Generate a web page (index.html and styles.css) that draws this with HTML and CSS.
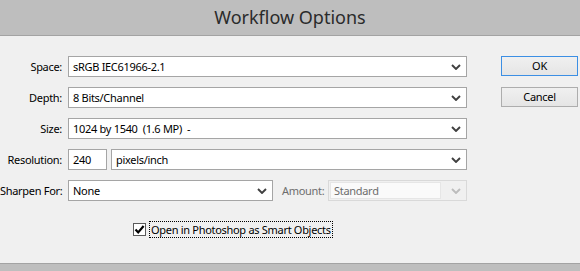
FILE: index.html
```html
<!DOCTYPE html>
<html lang="en">

<head>
    <meta charset="UTF-8">
    <meta name="viewport" content="width=device-width, initial-scale=1.0">
    <title>Workflow Options</title>
    <link rel="stylesheet" href="styles.css">
</head>

<body>
    <div class="dialog">
        <div class="title-bar">Workflow Options</div>

        <div class="dialog-body">
            <div class="fields">
                <div class="row">
                    <span class="label">Space:</span>
                    <div class="combo wide">
                        <span class="value">sRGB IEC61966-2.1</span>
                        <svg class="chevron" width="10" height="6" viewBox="0 0 10 6"><polyline points="1,1 5,5 9,1" /></svg>
                    </div>
                </div>

                <div class="row">
                    <span class="label">Depth:</span>
                    <div class="combo wide">
                        <span class="value">8 Bits/Channel</span>
                        <svg class="chevron" width="10" height="6" viewBox="0 0 10 6"><polyline points="1,1 5,5 9,1" /></svg>
                    </div>
                </div>

                <div class="row">
                    <span class="label">Size:</span>
                    <div class="combo wide">
                        <span class="value">1024 by 1540&nbsp; (1.6 MP)&nbsp; -</span>
                        <svg class="chevron" width="10" height="6" viewBox="0 0 10 6"><polyline points="1,1 5,5 9,1" /></svg>
                    </div>
                </div>

                <div class="row">
                    <span class="label">Resolution:</span>
                    <div class="text-box">240</div>
                    <div class="combo grow">
                        <span class="value">pixels/inch</span>
                        <svg class="chevron" width="10" height="6" viewBox="0 0 10 6"><polyline points="1,1 5,5 9,1" /></svg>
                    </div>
                </div>

                <div class="row">
                    <span class="label">Sharpen For:</span>
                    <div class="combo sharpen">
                        <span class="value">None</span>
                        <svg class="chevron" width="10" height="6" viewBox="0 0 10 6"><polyline points="1,1 5,5 9,1" /></svg>
                    </div>
                    <span class="label-inline disabled">Amount:</span>
                    <div class="combo disabled-combo grow">
                        <span class="edit-field">Standard</span>
                        <svg class="chevron" width="10" height="6" viewBox="0 0 10 6"><polyline points="1,1 5,5 9,1" /></svg>
                    </div>
                </div>

                <div class="check-row">
                    <span class="checkbox">
                        <svg width="11" height="11" viewBox="0 0 11 11"><path d="M1.5 5.5 L4.2 8.4 L9.6 2" /></svg>
                    </span>
                    <span class="check-label">Open in Photoshop as Smart Objects</span>
                </div>
            </div>

            <div class="buttons">
                <div class="button default">OK</div>
                <div class="button">Cancel</div>
            </div>
        </div>

        <div class="bottom-bar"></div>
    </div>
</body>

</html>
```

FILE: styles.css
```css
body {
    margin: 0;
    padding: 0;
    font-family: "Noto Sans", "Open Sans", sans-serif;
    font-size: 11px;
    letter-spacing: -0.3px;
    color: #000;
    background-color: #f0f0f0;
}

.dialog {
    width: 580px;
    height: 271px;
    display: flex;
    flex-direction: column;
    overflow: hidden;
}

.title-bar {
    height: 35px;
    background-color: #bebebe;
    border-bottom: 1px solid #a3a3a3;
    text-align: center;
    font-size: 18px;
    letter-spacing: 0;
    line-height: 35px;
    color: #2b2b2b;
}

.dialog-body {
    flex: 1;
    display: flex;
    gap: 34px;
    padding-top: 20px;
}

.fields {
    width: 467px;
    flex-shrink: 0;
    display: flex;
    flex-direction: column;
    gap: 10px;
}

.row {
    display: flex;
    align-items: center;
    height: 21px;
    gap: 4px;
}

.label {
    width: 62px;
    flex-shrink: 0;
    text-align: right;
    white-space: nowrap;
    margin-right: 2px;
}

.label-inline {
    width: 40px;
    flex-shrink: 0;
    margin-left: 5px;
    margin-right: 2px;
    white-space: nowrap;
}

.disabled {
    color: #6d6d6d;
}

.combo {
    height: 21px;
    box-sizing: border-box;
    border: 1px solid #a5a5a5;
    background: #fff;
    display: flex;
    align-items: center;
    padding-left: 4px;
    padding-right: 5px;
}

.combo .value {
    flex: 1;
    white-space: nowrap;
}

.wide {
    width: 400px;
}

.grow {
    flex: 1;
    min-width: 0;
}

.sharpen {
    width: 205px;
    flex-shrink: 0;
}

.chevron {
    flex-shrink: 0;
    fill: none;
    stroke: #404040;
    stroke-width: 1.9;
}

.text-box {
    width: 39px;
    flex-shrink: 0;
    height: 21px;
    box-sizing: border-box;
    border: 1px solid #a5a5a5;
    background: #fff;
    padding-left: 4px;
    line-height: 19px;
}

.disabled-combo {
    border-color: #d9d9d9;
    background: #f0f0f0;
    padding-left: 1px;
}

.disabled-combo .edit-field {
    flex: 1;
    height: 17px;
    box-sizing: border-box;
    border: 1px solid #e6e6e6;
    background: #fafafa;
    color: #6d6d6d;
    padding-left: 3px;
    line-height: 15px;
    margin-right: 10px;
}

.disabled-combo .chevron {
    stroke: #bcbcbc;
}

.check-row {
    display: flex;
    align-items: center;
    margin-top: 11px;
    padding-left: 133px;
    gap: 4px;
}

.checkbox {
    width: 13px;
    height: 13px;
    box-sizing: border-box;
    border: 1px solid #5a5a5a;
    background: #fff;
    display: flex;
    align-items: center;
    justify-content: center;
}

.checkbox svg {
    fill: none;
    stroke: #000;
    stroke-width: 2.2;
}

.check-label {
    outline: 1px dotted #000;
    padding: 0 1px;
    line-height: 15px;
}

.buttons {
    display: flex;
    flex-direction: column;
    gap: 11px;
}

.button {
    width: 77px;
    height: 20px;
    box-sizing: border-box;
    border: 1px solid #adadad;
    background: linear-gradient(#f0f0f0, #e5e5e5);
    text-align: center;
    line-height: 18px;
}

.button.default {
    border-color: #3c8fe4;
}

.bottom-bar {
    height: 7px;
    background-color: #bebebe;
    border-top: 1px solid #a3a3a3;
}
```
